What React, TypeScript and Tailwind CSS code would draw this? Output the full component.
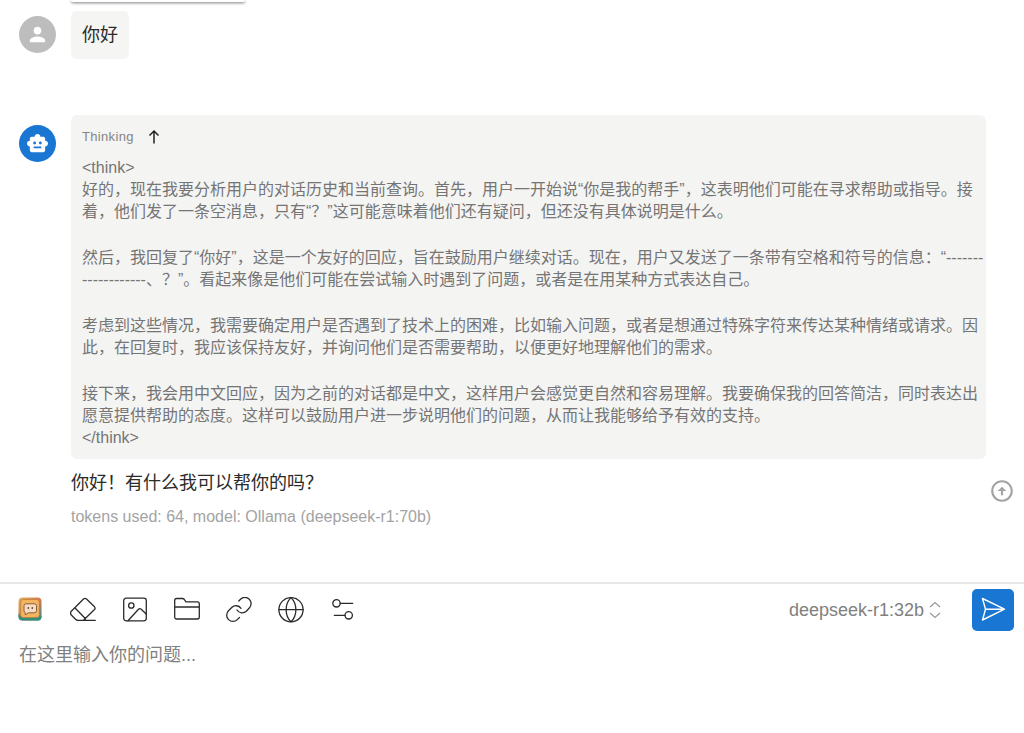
import { MdPerson, MdSmartToy, MdOutlineArrowCircleUp } from "react-icons/md";
import type { ReactNode } from "react";

const thoughts = [
  "<think>\n好的，现在我要分析用户的对话历史和当前查询。首先，用户一开始说“你是我的帮手”，这表明他们可能在寻求帮助或指导。接着，他们发了一条空消息，只有“？”这可能意味着他们还有疑问，但还没有具体说明是什么。",
  "然后，我回复了“你好”，这是一个友好的回应，旨在鼓励用户继续对话。现在，用户又发送了一条带有空格和符号的信息：“-------------------、？”。看起来像是他们可能在尝试输入时遇到了问题，或者是在用某种方式表达自己。",
  "考虑到这些情况，我需要确定用户是否遇到了技术上的困难，比如输入问题，或者是想通过特殊字符来传达某种情绪或请求。因此，在回复时，我应该保持友好，并询问他们是否需要帮助，以便更好地理解他们的需求。",
  "接下来，我会用中文回应，因为之前的对话都是中文，这样用户会感觉更自然和容易理解。我要确保我的回答简洁，同时表达出愿意提供帮助的态度。这样可以鼓励用户进一步说明他们的问题，从而让我能够给予有效的支持。\n</think>",
];

function Line({ children }: { children: ReactNode }) {
  return (
    <svg viewBox="0 0 26 26" className="size-[26px]" fill="none" stroke="currentColor" strokeWidth="1.3" strokeLinecap="round" strokeLinejoin="round" aria-hidden="true">
      {children}
    </svg>
  );
}

const tools: { label: string; icon: ReactNode }[] = [
  {
    label: "Clear",
    icon: (
      <Line>
        <path d="M1.300 14.200 13.500 2Q15 .800 16.500 2L24.500 9.800Q25.700 11.200 24.500 12.500L15 21.800 13.500 23.300H8Q6.500 23.300 5.500 22.300L1.300 18Q-.200 16 1.300 14.200ZM4.800 10.700 15.300 21.500V23.300M8 23.300H25.300" />
      </Line>
    ),
  },
  {
    label: "Image",
    icon: (
      <Line>
        <rect x="1.700" y="1.200" width="22.600" height="22.600" rx="2.500" />
        <circle cx="9.300" cy="8.500" r="2.700" />
        <path d="M6 23.700 16.500 12.200Q17.800 11 19.200 12.200L24.200 17" />
      </Line>
    ),
  },
  {
    label: "Folder",
    icon: (
      <Line>
        <path d="M.700 3.500Q.700 1.500 2.700 1.500H8.500Q9.500 1.500 10.200 2.300L12 4.800H23.300Q25.300 4.800 25.300 6.800V20Q25.300 22 23.300 22H2.700Q.700 22 .700 20ZM.700 10H25.300" />
      </Line>
    ),
  },
  {
    label: "Link",
    icon: (
      <Line>
        <path d="M11 13a6.100 6.100 0 0 0 9.300 1.300L23.300 11a6.200 6.200 0 0 0-8.800-8.800L12.800 4M15 11.300a6.100 6.100 0 0 0-9.300-.800L2.500 13.800a6.200 6.200 0 0 0 8.800 8.800L13.500 20.500" />
      </Line>
    ),
  },
  {
    label: "Web",
    icon: (
      <Line>
        <circle cx="13" cy="12.700" r="12.100" />
        <path d="M.900 12.700H25.100M13 .600C6.500 6.700 6.500 18.700 13 24.800M13 .600C19.500 6.700 19.500 18.700 13 24.800" />
      </Line>
    ),
  },
  {
    label: "Settings",
    icon: (
      <Line>
        <circle cx="6.500" cy="6.300" r="3.700" />
        <path d="M10.200 6.300H22.700M4.300 18.300H15" />
        <circle cx="18.700" cy="18.300" r="3.700" />
      </Line>
    ),
  },
];

function AppIcon() {
  return (
    <svg viewBox="0 0 26 26" className="size-[26px]" aria-hidden="true">
      <defs>
        <linearGradient id="frame" x1="0" y1="0" x2="1" y2="1">
          <stop offset="0" stopColor="#e3b565" />
          <stop offset="0.500" stopColor="#d9774f" />
          <stop offset="1" stopColor="#2f8c86" />
        </linearGradient>
      </defs>
      <rect x="0.500" y="0.500" width="23" height="23" rx="4" fill="url(#frame)" />
      <path d="M.500 16v3.500q0 4 4 4H20q3.500 0 3.500-4v-1l-3 2H4Z" fill="#2e8f7c" />
      <rect x="2.700" y="2.500" width="18.600" height="18" rx="2.500" fill="#f3b560" stroke="#b8793a" strokeWidth="0.700" />
      <path d="M8 6.800h8.500q2 0 2 2v5q0 2-2 2h-6L7.200 17.800v-2.200Q6 15.300 6 13.800v-5q0-2 2-2Z" fill="#f5dcc2" stroke="#8a5d40" strokeWidth="1" />
      <circle cx="10.300" cy="11" r="0.900" fill="#6f4733" />
      <circle cx="14.300" cy="11" r="0.900" fill="#6f4733" />
    </svg>
  );
}

export default function App() {
  return (
    <div className="flex min-h-screen flex-col bg-white font-['Liberation_Sans','Noto_Sans_CJK_SC',sans-serif] text-[#2b2b2b]">
      <main className="relative flex-1">
        <div className="ml-[71px] h-[2px] w-[174px] rounded-b bg-white shadow-[0_1px_3px_rgba(0,0,0,0.6)]" />
        <section className="mt-[9px] flex gap-[15px] pl-[19px]">
          <span className="mt-[5px] flex size-[37px] items-center justify-center rounded-full bg-[#bdbdbd] text-white">
            <MdPerson size={23} />
          </span>
          <p className="h-12 rounded-md bg-[#f5f5f4] px-[11px] pt-[10px] text-lg leading-7">你好</p>
        </section>
        <section className="mt-14 flex gap-[15px] pr-[38px] pl-[19px]">
          <span className="mt-[10px] flex size-[37px] shrink-0 items-center justify-center rounded-full bg-[#1976d2] text-white">
            <MdSmartToy size={23} />
          </span>
          <div className="min-w-0 flex-1">
            <div className="rounded-md bg-[#f4f4f3] pt-[10px] pb-[10px] pl-[11px] text-[#757575]">
              <button type="button" className="flex items-center gap-[14px] text-[13px] leading-6 tracking-wide text-[#858585]">
                Thinking
                <svg viewBox="0 0 12 16" className="h-4 w-3" fill="none" stroke="#212121" strokeWidth="1.500" aria-hidden="true">
                  <path d="M6 14.500V2M1.500 6.500 6 2 10.500 6.500" />
                </svg>
              </button>
              <div className="mt-2 flex flex-col gap-6 text-base leading-[22px] whitespace-pre-wrap">
                {thoughts.map((t) => (
                  <p key={t}>{t}</p>
                ))}
              </div>
            </div>
            <p className="mt-[10px] text-lg leading-7">你好！有什么我可以帮你的吗？</p>
            <p className="mt-2 text-base leading-6 text-[#a3a3a3]">tokens used: 64, model: Ollama (deepseek-r1:70b)</p>
          </div>
        </section>
        <button type="button" aria-label="Scroll to top" className="absolute right-[9px] bottom-[78px] text-[#a3a3a3]">
          <MdOutlineArrowCircleUp size={26} />
        </button>
      </main>
      <footer className="h-[151px] border-t-2 border-[#e8e8e8]">
        <div className="flex items-center pt-[5px] pr-[10px] pl-[18px]">
          <div className="flex items-center gap-[26px]">
            <button type="button" aria-label="App">
              <AppIcon />
            </button>
            {tools.map((t) => (
              <button key={t.label} type="button" aria-label={t.label}>
                {t.icon}
              </button>
            ))}
          </div>
          <div className="ml-auto flex items-center gap-[30px]">
            <button type="button" className="flex items-center gap-1 text-lg text-[#808080]">
              deepseek-r1:32b
              <svg viewBox="0 0 14 18" className="h-[18px] w-[14px]" fill="none" stroke="#999" strokeWidth="1.200" aria-hidden="true">
                <path d="M2 6 7 1.500 12 6M2 12 7 16.500 12 12" />
              </svg>
            </button>
            <button type="button" aria-label="Send" className="flex size-[42px] items-center justify-center rounded-[5px] bg-[#1976d2] text-white">
              <svg viewBox="0 0 26 26" className="size-[26px]" fill="none" stroke="currentColor" strokeWidth="1.400" strokeLinejoin="round" aria-hidden="true">
                <path d="M2.500 1.500 24.500 12.200 2.500 23 5.500 12.200ZM5.500 12.200H24.500" />
              </svg>
            </button>
          </div>
        </div>
        <textarea aria-label="Question" placeholder="在这里输入你的问题..." className="mt-[10px] block h-20 w-full resize-none px-[19px] text-lg leading-7 outline-none placeholder:text-[#808080]" />
      </footer>
    </div>
  );
}
